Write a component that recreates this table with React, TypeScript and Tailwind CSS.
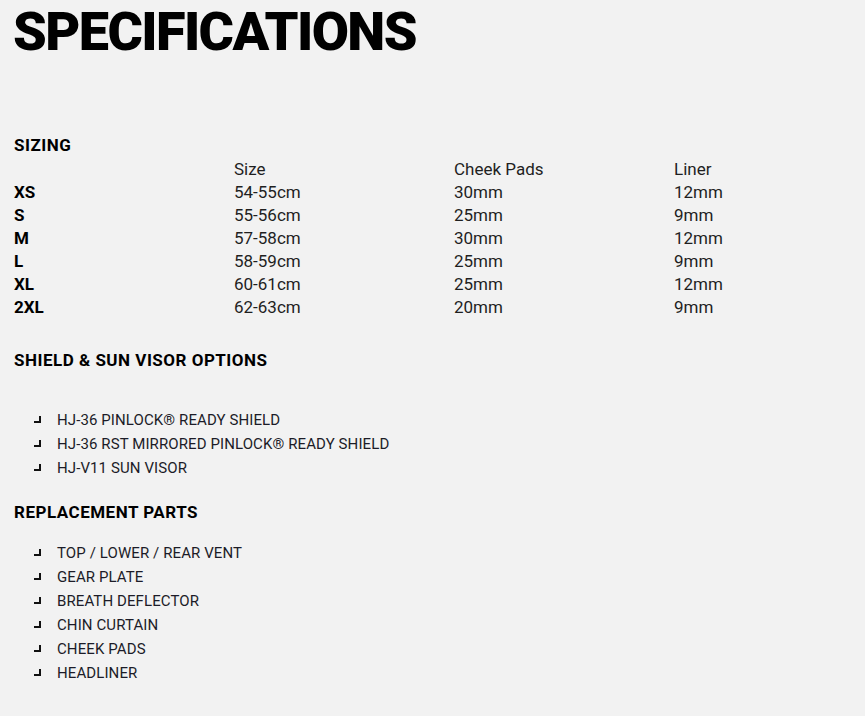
import React from "react";

const sizes = [
  { size: "XS", head: "54-55cm", cheek: "30mm", liner: "12mm" },
  { size: "S", head: "55-56cm", cheek: "25mm", liner: "9mm" },
  { size: "M", head: "57-58cm", cheek: "30mm", liner: "12mm" },
  { size: "L", head: "58-59cm", cheek: "25mm", liner: "9mm" },
  { size: "XL", head: "60-61cm", cheek: "25mm", liner: "12mm" },
  { size: "2XL", head: "62-63cm", cheek: "20mm", liner: "9mm" },
];

const shields = [
  "HJ-36 PINLOCK® READY SHIELD",
  "HJ-36 RST MIRRORED PINLOCK® READY SHIELD",
  "HJ-V11 SUN VISOR",
];

const parts = [
  "TOP / LOWER / REAR VENT",
  "GEAR PLATE",
  "BREATH DEFLECTOR",
  "CHIN CURTAIN",
  "CHEEK PADS",
  "HEADLINER",
];

const Bullet = () => (
  <span className="mr-[16px] inline-block h-[7px] w-[7px] border-b-2 border-r-2 border-[#111] translate-y-[-1px]" />
);

const ItemList = ({ items }: { items: string[] }) => (
  <ul className="pl-[20px]">
    {items.map((item) => (
      <li
        key={item}
        className="flex items-center h-[24px] text-[15px] text-[#1c1c28] tracking-[0.1px]"
      >
        <Bullet />
        {item}
      </li>
    ))}
  </ul>
);

export default function App() {
  return (
    <div
      className="min-h-[716px] w-full bg-[#f2f2f2] px-[14px] pt-[5px] text-[#111]"
      style={{ fontFamily: "Roboto, 'Liberation Sans', sans-serif" }}
    >
      <h1 className="text-[54px] leading-[54px] font-black tracking-[-1.6px] text-black -ml-[1px]">
        SPECIFICATIONS
      </h1>

      <h2 className="mt-[75px] text-[17px] leading-[23px] font-bold tracking-[0.5px] text-black">
        SIZING
      </h2>
      <div className="mt-[1px] grid grid-cols-[220px_220px_220px_1fr] text-[17px] leading-[23px] text-[#1f1f1f]">
        <div />
        <div>Size</div>
        <div>Cheek Pads</div>
        <div>Liner</div>
        {sizes.map((row) => (
          <React.Fragment key={row.size}>
            <div className="font-bold text-black">{row.size}</div>
            <div>{row.head}</div>
            <div>{row.cheek}</div>
            <div>{row.liner}</div>
          </React.Fragment>
        ))}
      </div>

      <h2 className="mt-[30px] text-[17px] leading-[23px] font-bold tracking-[0.5px] text-black">
        SHIELD &amp; SUN VISOR OPTIONS
      </h2>
      <div className="mt-[36px]">
        <ItemList items={shields} />
      </div>

      <h2 className="mt-[21px] text-[17px] leading-[23px] font-bold tracking-[0.5px] text-black">
        REPLACEMENT PARTS
      </h2>
      <div className="mt-[17px]">
        <ItemList items={parts} />
      </div>
    </div>
  );
}
